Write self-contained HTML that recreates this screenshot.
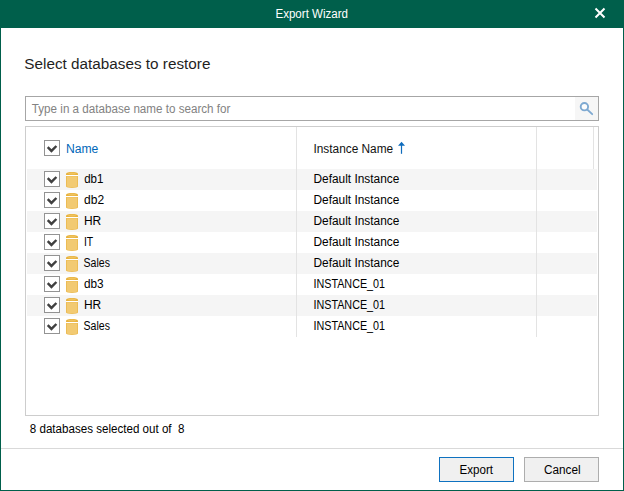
<!DOCTYPE html>
<html><head><meta charset="utf-8"><title>Export Wizard</title>
<style>
html,body{margin:0;padding:0;}
body{width:624px;height:491px;overflow:hidden;background:#fff;font-family:"Liberation Sans",sans-serif;font-size:12px;color:#000;position:relative;}
.abs{position:absolute;}
#win{left:0;top:0;width:622px;height:489px;border:1px solid #005f4b;background:#fff;box-sizing:content-box;}
#title{left:0;top:0;width:624px;height:28px;background:#005f4b;}
.t{position:absolute;white-space:nowrap;line-height:1;transform-origin:0 0;}
#search{left:25px;top:96px;width:572px;height:23px;border:1px solid #a6a6a6;background:#fff;}
#sbtn{left:575px;top:97px;width:23px;height:23px;background:#f6f6f6;}
#table{left:25px;top:126px;width:572px;height:288px;border:1px solid #cdcdcd;}
.vs{width:1px;background:#e3e3e3;z-index:2;}
.row{left:27px;width:570px;height:21px;background:#f5f5f5;}
.cb{width:14px;height:14px;border:1px solid #939393;background:#fff;}
#sep{left:1px;top:448px;width:622px;height:1px;background:#d9d9d9;}
.btn{top:457px;width:73px;height:23px;background:#f0f0f0;border:1px solid #adadad;}
</style></head><body>
<div id="win" class="abs"></div>
<div id="title" class="abs"></div>
<svg class="abs" style="left:594px;top:7.2px" width="12" height="12" viewBox="0 0 12 12"><path d="M1.5 1.5 L10.5 10.5 M10.5 1.5 L1.5 10.5" stroke="#fff" stroke-width="2" fill="none"/></svg>
<div id="search" class="abs"></div>
<div id="sbtn" class="abs"></div>
<svg class="abs" style="left:575px;top:97px" width="23" height="23" viewBox="0 0 23 23"><circle cx="9.4" cy="9.7" r="3.7" stroke="#7ea9d1" stroke-width="1.9" fill="#fcfcfc"/><path d="M12.2 12.5 L17.2 17.2" stroke="#7ea9d1" stroke-width="1.8" stroke-linecap="round"/></svg>
<div id="table" class="abs"></div>
<div class="abs vs" style="left:296px;top:127px;height:210px"></div>
<div class="abs vs" style="left:536px;top:127px;height:210px"></div>
<div class="abs vs" style="left:593px;top:127px;height:42px"></div>
<div id="sep" class="abs"></div>
<div class="abs btn" style="left:439px;border-color:#0f72c0"></div>
<div class="abs btn" style="left:524px"></div>
<div class="abs cb" style="left:44px;top:140px"></div><svg class="abs" style="left:44px;top:140px" width="16" height="16" viewBox="0 0 16 16"><path d="M3.7 7.2 L7.45 10.95 L12.4 6.0" stroke="#404040" stroke-width="2.4" fill="none"/></svg>
<svg class="abs" style="left:397px;top:141px" width="10" height="14" viewBox="0 0 10 14"><path d="M4.5 0.8 L8 4.8 L1 4.8 Z" fill="#0f6cbd"/><rect x="3.9" y="4" width="1.2" height="8.8" fill="#0f6cbd"/></svg>
<div class="abs row" style="top:169px"></div>
<div class="abs cb" style="left:44px;top:171px"></div><svg class="abs" style="left:44px;top:171px" width="16" height="16" viewBox="0 0 16 16"><path d="M3.7 7.2 L7.45 10.95 L12.4 6.0" stroke="#404040" stroke-width="2.4" fill="none"/></svg>
<svg class="abs" style="left:66px;top:172px" width="12" height="16" viewBox="0 0 12 16"><path d="M0 3 L0 1.7 A6 1.8 0 0 1 12 1.7 L12 3 Z" fill="#e8b33e"/><ellipse cx="6" cy="1.5" rx="3.8" ry="0.9" fill="#efc25f"/><rect x="0" y="3" width="12" height="1" fill="#fff"/><path d="M0 4 L12 4 L12 14.4 A6 1.6 0 0 1 0 14.4 Z" fill="#ecbc55"/><path d="M1 4.6 L11 4.6 L11 14 A5 1.2 0 0 1 1 14 Z" fill="#f2ca72"/></svg>
<div class="abs cb" style="left:44px;top:192px"></div><svg class="abs" style="left:44px;top:192px" width="16" height="16" viewBox="0 0 16 16"><path d="M3.7 7.2 L7.45 10.95 L12.4 6.0" stroke="#404040" stroke-width="2.4" fill="none"/></svg>
<svg class="abs" style="left:66px;top:193px" width="12" height="16" viewBox="0 0 12 16"><path d="M0 3 L0 1.7 A6 1.8 0 0 1 12 1.7 L12 3 Z" fill="#e8b33e"/><ellipse cx="6" cy="1.5" rx="3.8" ry="0.9" fill="#efc25f"/><rect x="0" y="3" width="12" height="1" fill="#fff"/><path d="M0 4 L12 4 L12 14.4 A6 1.6 0 0 1 0 14.4 Z" fill="#ecbc55"/><path d="M1 4.6 L11 4.6 L11 14 A5 1.2 0 0 1 1 14 Z" fill="#f2ca72"/></svg>
<div class="abs row" style="top:211px"></div>
<div class="abs cb" style="left:44px;top:213px"></div><svg class="abs" style="left:44px;top:213px" width="16" height="16" viewBox="0 0 16 16"><path d="M3.7 7.2 L7.45 10.95 L12.4 6.0" stroke="#404040" stroke-width="2.4" fill="none"/></svg>
<svg class="abs" style="left:66px;top:214px" width="12" height="16" viewBox="0 0 12 16"><path d="M0 3 L0 1.7 A6 1.8 0 0 1 12 1.7 L12 3 Z" fill="#e8b33e"/><ellipse cx="6" cy="1.5" rx="3.8" ry="0.9" fill="#efc25f"/><rect x="0" y="3" width="12" height="1" fill="#fff"/><path d="M0 4 L12 4 L12 14.4 A6 1.6 0 0 1 0 14.4 Z" fill="#ecbc55"/><path d="M1 4.6 L11 4.6 L11 14 A5 1.2 0 0 1 1 14 Z" fill="#f2ca72"/></svg>
<div class="abs cb" style="left:44px;top:234px"></div><svg class="abs" style="left:44px;top:234px" width="16" height="16" viewBox="0 0 16 16"><path d="M3.7 7.2 L7.45 10.95 L12.4 6.0" stroke="#404040" stroke-width="2.4" fill="none"/></svg>
<svg class="abs" style="left:66px;top:235px" width="12" height="16" viewBox="0 0 12 16"><path d="M0 3 L0 1.7 A6 1.8 0 0 1 12 1.7 L12 3 Z" fill="#e8b33e"/><ellipse cx="6" cy="1.5" rx="3.8" ry="0.9" fill="#efc25f"/><rect x="0" y="3" width="12" height="1" fill="#fff"/><path d="M0 4 L12 4 L12 14.4 A6 1.6 0 0 1 0 14.4 Z" fill="#ecbc55"/><path d="M1 4.6 L11 4.6 L11 14 A5 1.2 0 0 1 1 14 Z" fill="#f2ca72"/></svg>
<div class="abs row" style="top:253px"></div>
<div class="abs cb" style="left:44px;top:255px"></div><svg class="abs" style="left:44px;top:255px" width="16" height="16" viewBox="0 0 16 16"><path d="M3.7 7.2 L7.45 10.95 L12.4 6.0" stroke="#404040" stroke-width="2.4" fill="none"/></svg>
<svg class="abs" style="left:66px;top:256px" width="12" height="16" viewBox="0 0 12 16"><path d="M0 3 L0 1.7 A6 1.8 0 0 1 12 1.7 L12 3 Z" fill="#e8b33e"/><ellipse cx="6" cy="1.5" rx="3.8" ry="0.9" fill="#efc25f"/><rect x="0" y="3" width="12" height="1" fill="#fff"/><path d="M0 4 L12 4 L12 14.4 A6 1.6 0 0 1 0 14.4 Z" fill="#ecbc55"/><path d="M1 4.6 L11 4.6 L11 14 A5 1.2 0 0 1 1 14 Z" fill="#f2ca72"/></svg>
<div class="abs cb" style="left:44px;top:276px"></div><svg class="abs" style="left:44px;top:276px" width="16" height="16" viewBox="0 0 16 16"><path d="M3.7 7.2 L7.45 10.95 L12.4 6.0" stroke="#404040" stroke-width="2.4" fill="none"/></svg>
<svg class="abs" style="left:66px;top:277px" width="12" height="16" viewBox="0 0 12 16"><path d="M0 3 L0 1.7 A6 1.8 0 0 1 12 1.7 L12 3 Z" fill="#e8b33e"/><ellipse cx="6" cy="1.5" rx="3.8" ry="0.9" fill="#efc25f"/><rect x="0" y="3" width="12" height="1" fill="#fff"/><path d="M0 4 L12 4 L12 14.4 A6 1.6 0 0 1 0 14.4 Z" fill="#ecbc55"/><path d="M1 4.6 L11 4.6 L11 14 A5 1.2 0 0 1 1 14 Z" fill="#f2ca72"/></svg>
<div class="abs row" style="top:295px"></div>
<div class="abs cb" style="left:44px;top:297px"></div><svg class="abs" style="left:44px;top:297px" width="16" height="16" viewBox="0 0 16 16"><path d="M3.7 7.2 L7.45 10.95 L12.4 6.0" stroke="#404040" stroke-width="2.4" fill="none"/></svg>
<svg class="abs" style="left:66px;top:298px" width="12" height="16" viewBox="0 0 12 16"><path d="M0 3 L0 1.7 A6 1.8 0 0 1 12 1.7 L12 3 Z" fill="#e8b33e"/><ellipse cx="6" cy="1.5" rx="3.8" ry="0.9" fill="#efc25f"/><rect x="0" y="3" width="12" height="1" fill="#fff"/><path d="M0 4 L12 4 L12 14.4 A6 1.6 0 0 1 0 14.4 Z" fill="#ecbc55"/><path d="M1 4.6 L11 4.6 L11 14 A5 1.2 0 0 1 1 14 Z" fill="#f2ca72"/></svg>
<div class="abs cb" style="left:44px;top:318px"></div><svg class="abs" style="left:44px;top:318px" width="16" height="16" viewBox="0 0 16 16"><path d="M3.7 7.2 L7.45 10.95 L12.4 6.0" stroke="#404040" stroke-width="2.4" fill="none"/></svg>
<svg class="abs" style="left:66px;top:319px" width="12" height="16" viewBox="0 0 12 16"><path d="M0 3 L0 1.7 A6 1.8 0 0 1 12 1.7 L12 3 Z" fill="#e8b33e"/><ellipse cx="6" cy="1.5" rx="3.8" ry="0.9" fill="#efc25f"/><rect x="0" y="3" width="12" height="1" fill="#fff"/><path d="M0 4 L12 4 L12 14.4 A6 1.6 0 0 1 0 14.4 Z" fill="#ecbc55"/><path d="M1 4.6 L11 4.6 L11 14 A5 1.2 0 0 1 1 14 Z" fill="#f2ca72"/></svg>
<div class="t" id="ttext" style="left:0;top:0;font-size:12px;color:#fff;transform:translate(275.46px,8.4px) scaleX(0.9627);">Export Wizard</div>
<div class="t" id="h1" style="left:0;top:0;font-size:15.5px;color:#1f1f1f;transform:translate(24.30px,56px) scaleX(0.9866);">Select databases to restore</div>
<div class="t" id="ph" style="left:0;top:0;font-size:12px;color:#828282;transform:translate(31.84px,103px) scaleX(0.9696);">Type in a database name to search for</div>
<div class="t" id="hname" style="left:0;top:0;font-size:12px;color:#0067b8;transform:translate(65.96px,143px) scaleX(1.0106);">Name</div>
<div class="t" id="hinst" style="left:0;top:0;font-size:12px;color:#111;transform:translate(313.42px,143px) scaleX(0.9885);">Instance Name</div>
<div class="t" id="n0" style="left:0;top:0;font-size:12px;color:#000;transform:translate(84.17px,173px) scaleX(0.9603);">db1</div>
<div class="t" id="i0" style="left:0;top:0;font-size:12px;color:#000;transform:translate(313.43px,173px) scaleX(0.9906);">Default Instance</div>
<div class="t" id="n1" style="left:0;top:0;font-size:12px;color:#000;transform:translate(84.09px,194px) scaleX(0.9999);">db2</div>
<div class="t" id="i1" style="left:0;top:0;font-size:12px;color:#000;transform:translate(313.43px,194px) scaleX(0.9906);">Default Instance</div>
<div class="t" id="n2" style="left:0;top:0;font-size:12px;color:#000;transform:translate(83.92px,215px) scaleX(0.9964);">HR</div>
<div class="t" id="i2" style="left:0;top:0;font-size:12px;color:#000;transform:translate(313.43px,215px) scaleX(0.9906);">Default Instance</div>
<div class="t" id="n3" style="left:0;top:0;font-size:12px;color:#000;transform:translate(83.94px,236px) scaleX(0.8655);">IT</div>
<div class="t" id="i3" style="left:0;top:0;font-size:12px;color:#000;transform:translate(313.43px,236px) scaleX(0.9906);">Default Instance</div>
<div class="t" id="n4" style="left:0;top:0;font-size:12px;color:#000;transform:translate(83.57px,257px) scaleX(0.8805);">Sales</div>
<div class="t" id="i4" style="left:0;top:0;font-size:12px;color:#000;transform:translate(313.43px,257px) scaleX(0.9906);">Default Instance</div>
<div class="t" id="n5" style="left:0;top:0;font-size:12px;color:#000;transform:translate(83.99px,278px) scaleX(0.9812);">db3</div>
<div class="t" id="i5" style="left:0;top:0;font-size:12px;color:#000;transform:translate(313.42px,278px) scaleX(0.8980);">INSTANCE_01</div>
<div class="t" id="n6" style="left:0;top:0;font-size:12px;color:#000;transform:translate(83.92px,299px) scaleX(0.9964);">HR</div>
<div class="t" id="i6" style="left:0;top:0;font-size:12px;color:#000;transform:translate(313.42px,299px) scaleX(0.8980);">INSTANCE_01</div>
<div class="t" id="n7" style="left:0;top:0;font-size:12px;color:#000;transform:translate(83.57px,320px) scaleX(0.8806);">Sales</div>
<div class="t" id="i7" style="left:0;top:0;font-size:12px;color:#000;transform:translate(313.42px,320px) scaleX(0.8980);">INSTANCE_01</div>
<div class="t" id="status" style="left:0;top:0;font-size:12px;color:#000;transform:translate(29.82px,423px) scaleX(0.9656);">8 databases selected out of&nbsp; 8</div>
<div class="t" id="bexp" style="left:0;top:0;font-size:12px;color:#000;transform:translate(459.51px,464px) scaleX(0.9644);">Export</div>
<div class="t" id="bcan" style="left:0;top:0;font-size:12px;color:#000;transform:translate(543.93px,464px) scaleX(0.9807);">Cancel</div>
</body></html>
